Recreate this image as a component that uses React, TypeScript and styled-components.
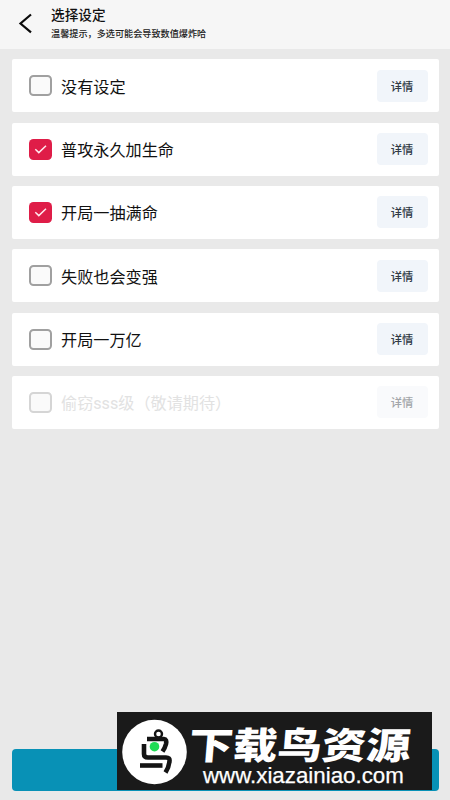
import React, { useState } from "react";
import styled, { createGlobalStyle } from "styled-components";

const Global = createGlobalStyle`
  * { box-sizing: border-box; }
  body { margin: 0; background: #e9e9e9; }
  button { font: inherit; border: 0; padding: 0; }
`;

const Page = styled.div`
  position: relative;
  display: flex;
  flex-direction: column;
  width: 450px;
  height: 800px;
  overflow: hidden;
  background: #e9e9e9;
  color: #111;
  font-family: Roboto, "Noto Sans CJK SC", sans-serif;
`;

const Header = styled.header`
  display: flex;
  flex: none;
  height: 49px;
  background: #f6f6f6;
`;

const Back = styled.button`
  width: 51px;
  height: 49px;
  background: none;
  color: #0b0b0b;
  svg { display: block; }
`;

const Heading = styled.div`
  display: flex;
  flex-direction: column;
  padding-top: 5px;
`;

const Title = styled.h1`
  margin: 0;
  font-size: 13.65px;
  line-height: 20px;
  font-weight: 500;
`;

const Hint = styled.p`
  margin: 2px 0 0;
  font-size: 9.15px;
  line-height: 15px;
  font-weight: 500;
  color: #222;
  white-space: nowrap;
`;

const List = styled.main`
  display: flex;
  flex: 1;
  flex-direction: column;
  gap: 10.3px;
  padding: 10.4px 11.5px 0 12px;
`;

const Row = styled.div<{ $disabled?: boolean }>`
  display: flex;
  align-items: center;
  flex: none;
  height: 53px;
  padding: 0 11px 0 17px;
  border-radius: 2px;
  background: #fff;
  color: ${(p) => (p.$disabled ? "#e2e2e2" : "#111")};
`;

const Check = styled.button<{ $checked: boolean; $disabled?: boolean }>`
  display: flex;
  align-items: center;
  justify-content: center;
  width: 23px;
  height: 21px;
  border: ${(p) => (p.$checked ? "0" : `2px solid ${p.$disabled ? "#d5d5d5" : "#a0a0a0"}`)};
  border-radius: 4.5px;
  background: ${(p) => (p.$checked ? "#df1d48" : "#fafafa")};
`;

const Label = styled.span`
  flex: 1;
  margin-left: 9px;
  font-size: 16.15px;
  line-height: 24px;
  padding-top: 4px;
  white-space: nowrap;
`;

const Detail = styled.button<{ $disabled?: boolean }>`
  width: 51px;
  height: 32px;
  border-radius: 4px;
  background: ${(p) => (p.$disabled ? "#f9fafc" : "#f1f5fa")};
  color: ${(p) => (p.$disabled ? "#a3a6aa" : "#303a46")};
  font-size: 11.3px;
  font-weight: 500;
`;

const Confirm = styled.button`
  flex: none;
  height: 42px;
  margin: 0 11.5px 9.5px 12px;
  border-radius: 4px;
  background: #0891b6;
`;

const Watermark = styled.aside`
  position: absolute;
  left: 117px;
  top: 712px;
  display: flex;
  width: 315px;
  height: 78px;
  background: #1a1a1a;
  color: #fff;
`;

const Emblem = styled.svg`
  flex: none;
  width: 72px;
  height: 78px;
`;

const BrandText = styled.div`
  display: flex;
  flex-direction: column;
  padding-top: 12px;
`;

const BrandName = styled.div`
  height: 38px;
  font: 900 37px/38px "Noto Sans CJK SC", sans-serif;
  white-space: nowrap;
  transform: scaleX(1.2) skewX(-4deg);
  transform-origin: 0 50%;
`;

const BrandUrl = styled.div`
  margin: 1px 0 0 14px;
  font: 22.3px/26px "Liberation Sans", sans-serif;
  -webkit-text-stroke: 0.25px #fff;
  white-space: nowrap;
`;

const settings = [
  { label: "没有设定", checked: false },
  { label: "普攻永久加生命", checked: true },
  { label: "开局一抽满命", checked: true },
  { label: "失败也会变强", checked: false },
  { label: "开局一万亿", checked: false },
  { label: "偷窃sss级（敬请期待）", checked: false, disabled: true },
];

export default function App() {
  const [checked, setChecked] = useState(settings.map((s) => s.checked));
  const toggle = (index: number) =>
    setChecked((values) => values.map((v, i) => (i === index ? !v : v)));

  return (
    <Page lang="zh-CN">
      <Global />
      <Header>
        <Back aria-label="返回">
          <svg width="51" height="49" fill="none" stroke="currentColor" strokeWidth="2.2">
            <path d="M31 14.5 20.5 23.5 31 32.3" />
          </svg>
        </Back>
        <Heading>
          <Title>选择设定</Title>
          <Hint>温馨提示，多选可能会导致数值爆炸哈</Hint>
        </Heading>
      </Header>
      <List>
        {settings.map((s, i) => (
          <Row key={s.label} $disabled={s.disabled}>
            <Check
              role="checkbox"
              aria-checked={checked[i]}
              aria-label={s.label}
              disabled={s.disabled}
              $checked={checked[i]}
              $disabled={s.disabled}
              onClick={() => toggle(i)}
            >
              {checked[i] && (
                <svg width="23" height="21" fill="none" stroke="#ffe9ee" strokeWidth="1.5">
                  <path d="M6.3 10.3 9.8 13.6 17 6.8" />
                </svg>
              )}
            </Check>
            <Label>{s.label}</Label>
            <Detail disabled={s.disabled} $disabled={s.disabled}>详情</Detail>
          </Row>
        ))}
      </List>
      <Confirm aria-label="确定" />
      <Watermark>
        <Emblem viewBox="0 0 72 78">
          <circle cx="37.5" cy="40" r="32.3" fill="#fff" />
          <g fill="none" stroke="#141414" strokeWidth="4.6">
            <circle cx="41.5" cy="22" r="3.5" strokeWidth="2.4" />
            <path d="M30 27H47Q50 27 49 32Q48 36 45.5 39.5" />
            <path d="M27 32V42Q27 45.5 31 45.5H49Q53 45.5 52.5 49Q52 55 48.5 60.5" />
            <path d="M23 53.5H45.5" />
          </g>
          <circle cx="37.5" cy="34.7" r="4.8" fill="#20dc55" />
        </Emblem>
        <BrandText>
          <BrandName>下载鸟资源</BrandName>
          <BrandUrl>www.xiazainiao.com</BrandUrl>
        </BrandText>
      </Watermark>
    </Page>
  );
}
